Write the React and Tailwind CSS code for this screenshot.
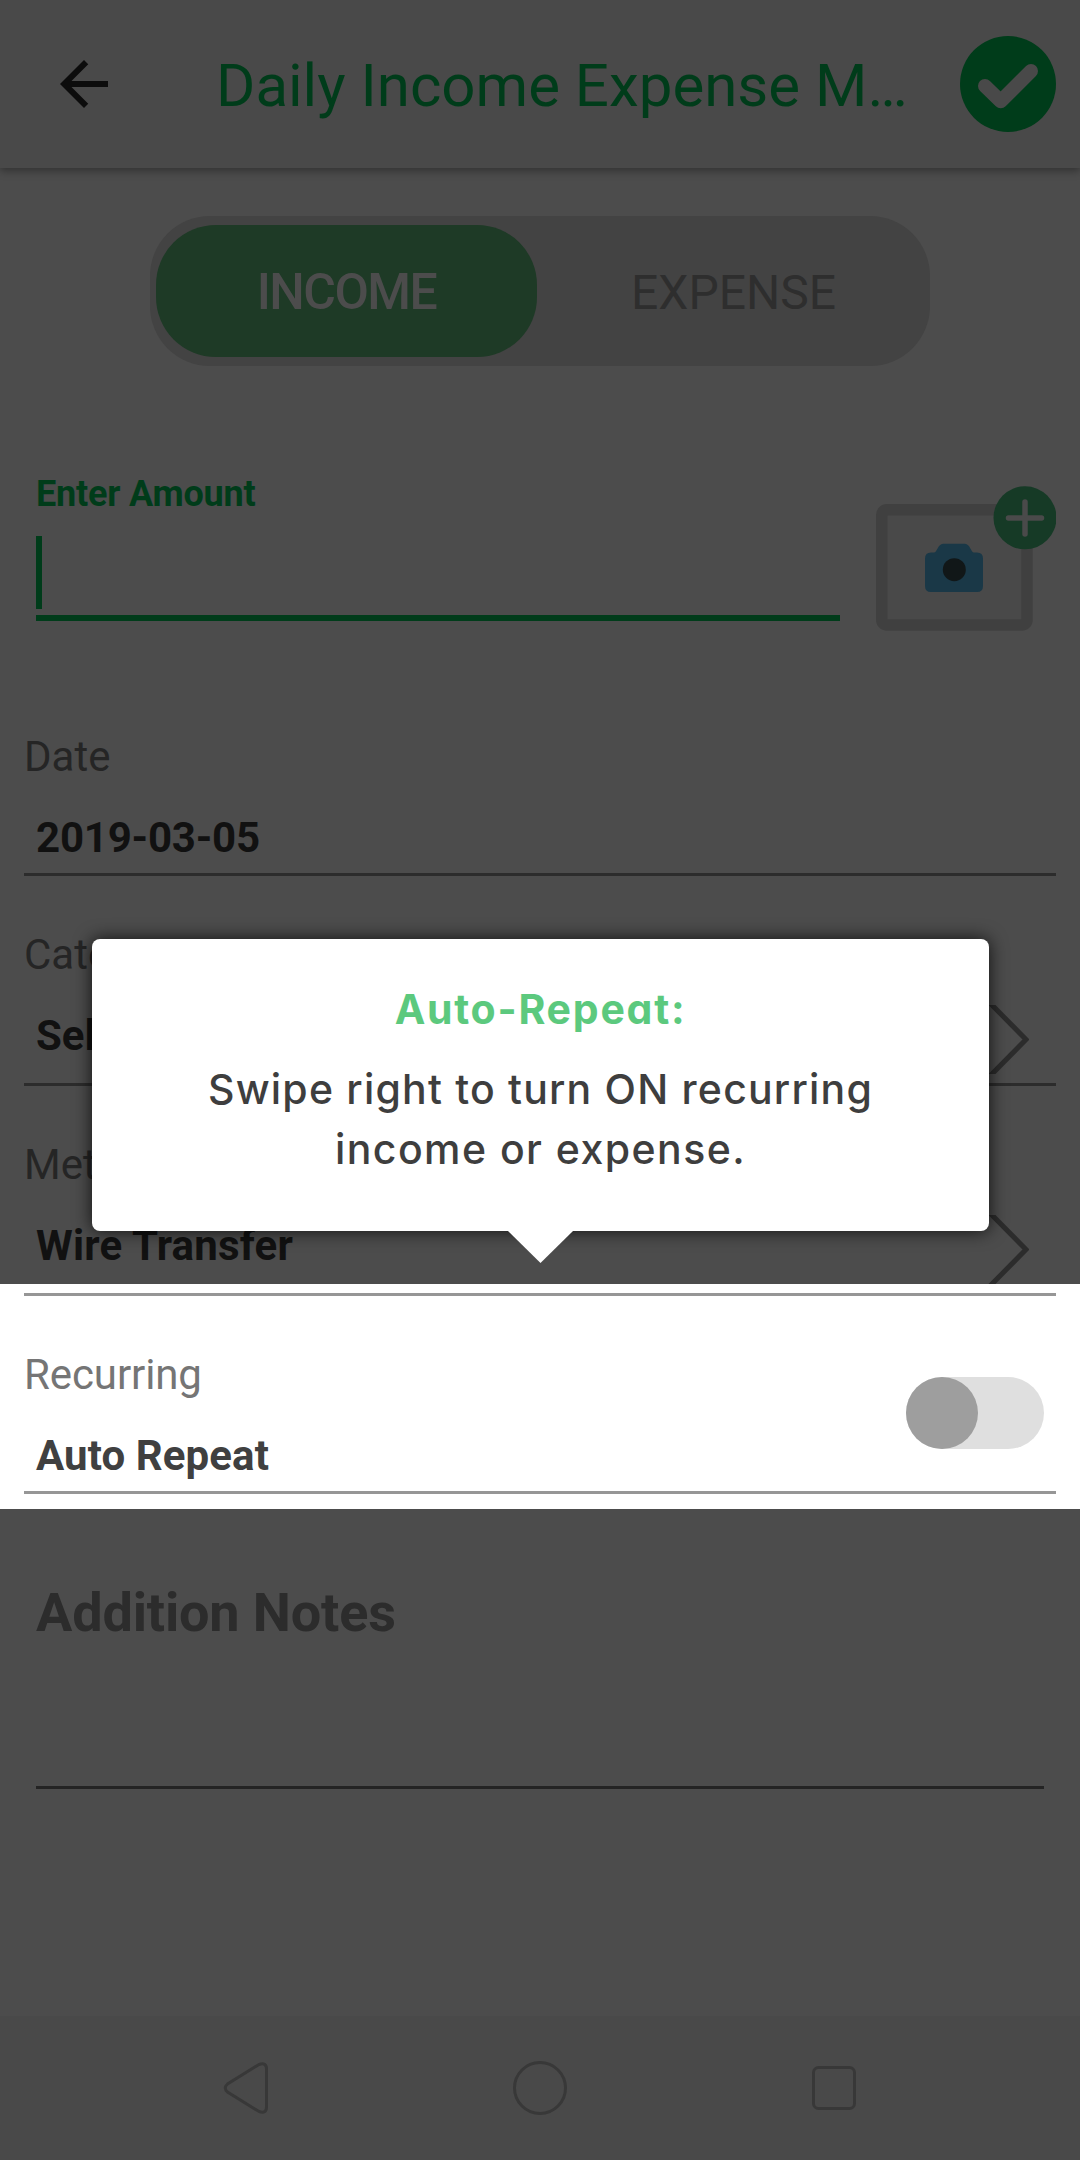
import { MdArrowBack } from "react-icons/md";

function Header() {
  return (
    <header className="relative z-10 flex h-[168px] shrink-0 items-center bg-[#494949] pl-12 pr-6 shadow-[0_3px_8px_rgba(0,0,0,0.35)]">
      <MdArrowBack className="size-[72px] shrink-0 text-[#0c0c0c]" />
      <h1 className="ml-24 grow whitespace-nowrap pt-1 text-[60px] leading-[72px] text-[#003c1a]">
        Daily Income Expense M…
      </h1>
      <svg className="size-24 shrink-0" viewBox="960 36 96 96" fill="none">
        <circle cx="1008" cy="84" r="48" fill="#003c1a" />
        <path d="M985 86L1000.7 101.3L1031 71" stroke="#494949" strokeWidth="14" strokeLinecap="round" strokeLinejoin="round" />
      </svg>
    </header>
  );
}

function Tabs() {
  return (
    <div className="mx-auto mt-12 flex h-[150px] w-[780px] shrink-0 items-center rounded-[60px] bg-[#434343] px-1.5">
      <div className="flex h-[132px] w-[381px] items-center justify-center rounded-[60px] bg-[#1e3a26] pt-[3px] text-[50px] font-medium tracking-[-1.5px] text-[#4c4c4c]">
        INCOME
      </div>
      <div className="flex flex-1 items-center justify-center pl-1.5 pt-1 text-[48px] text-[#2e2e2e]">EXPENSE</div>
    </div>
  );
}

function AddPhoto() {
  return (
    <svg className="h-[145px] w-[180px] shrink-0" viewBox="876 486 180 145">
      <rect x="881.8" y="509.8" width="145.2" height="115.2" rx="5" fill="#494949" stroke="#404040" strokeWidth="11.5" />
      <path d="M931 552.5h3c3 0 4-8.8 9-8.8h22c5 0 6 8.8 9 8.8h3q6 0 6 6V586q0 6-6 6h-46q-6 0-6-6v-27.500q0-6 6-6z" fill="#1a3847" />
      <circle cx="954.3" cy="569.7" r="11.5" fill="#111718" />
      <circle cx="1025" cy="517.8" r="31.500" fill="#163a26" />
      <path d="M1025 502v32M1008.500 518h33" stroke="#4a4a4a" strokeWidth="5.500" strokeLinecap="round" />
    </svg>
  );
}

function Field({ label, value, height, chevron, border = "border-b-[3px] border-[#2c2c2c]", labelColor = "text-[#252525]", valueStyle, children }) {
  return (
    <div className={`relative mx-6 shrink-0 pt-px ${height} ${border}`}>
      <div className={`text-[42px] leading-[50px] ${labelColor}`}>{label}</div>
      <div className={`ml-3 mt-[31px] text-[42px] font-bold leading-[50px] ${valueStyle}`}>{value}</div>
      {chevron && (
        <svg className="absolute right-[27px] top-[76px] h-[69px] w-[41px]" viewBox="0 0 41 69" fill="none">
          <path d="M1 -3L38 34.500L1 72" stroke="#2c2c2c" strokeWidth="5" />
        </svg>
      )}
      {children}
    </div>
  );
}

function Popup() {
  return (
    <div className="absolute left-[92px] top-[939px] z-20 h-[292px] w-[897px] rounded-lg bg-white pt-[43px] text-center font-['Inter',sans-serif] shadow-[0_0_18px_rgba(0,0,0,0.8)] [font-feature-settings:'cv11']">
      <div className="text-[41px] font-bold leading-[54px] tracking-[1.75px] text-[#5cc97e]">Auto-Repeat:</div>
      <p className="mt-[23px] text-[41px] font-medium leading-[60px] text-[#3e3e3e]">
        <span className="block tracking-[1.2px]">Swipe right to turn ON recurring</span>
        <span className="block tracking-[1.45px]">income or expense.</span>
      </p>
      <svg className="absolute left-[415px] top-[291px] h-[33px] w-[67px]" viewBox="0 0 67 33">
        <path d="M0 0H67L33.500 33Z" fill="#fff" />
      </svg>
    </div>
  );
}

function NavBar() {
  return (
    <nav className="mt-auto flex h-36 shrink-0 items-center justify-between bg-[#494949] px-[222px]">
      <svg className="h-[54px] w-12" viewBox="0 0 48 54" fill="none" stroke="#383838" strokeWidth="3">
        <path d="M37 3.500L5.500 23Q1 27 5.500 31L37 50.500Q44.500 53 44.500 46V8Q44.500 1 37 3.500Z" />
      </svg>
      <svg className="size-[54px]" viewBox="0 0 54 54" fill="none" stroke="#383838" strokeWidth="3">
        <circle cx="27" cy="27" r="25.500" />
      </svg>
      <svg className="h-11 w-12" viewBox="0 0 48 44" fill="none" stroke="#383838" strokeWidth="3">
        <rect x="3.500" y="1.500" width="41" height="41" rx="5" />
      </svg>
    </nav>
  );
}

export default function App() {
  return (
    <div className="relative flex h-[2160px] w-[1080px] flex-col overflow-hidden bg-[#4c4c4c] font-['Roboto',sans-serif]">
      <Header />
      <Tabs />
      <div className="mt-[108px] flex h-[157px] shrink-0 items-end justify-between pl-9 pr-6">
        <div className="mb-[10px] flex h-[147px] w-[804px] flex-col border-b-[6px] border-[#003c1a]">
          <div className="-mt-px text-[36px] font-bold leading-[42px] tracking-[-0.2px] text-[#003c1a]">Enter Amount</div>
          <div className="mt-auto mb-1.5 h-[73px] w-1.5 bg-[#003c1a]" />
        </div>
        <AddPhoto />
      </div>
      <div className="h-[100px] shrink-0" />
      <Field label="Date" value="2019-03-05" height="h-[145px]" valueStyle="text-[#111111] tracking-[-0.2px]" />
      <div className="h-[53px] shrink-0" />
      <Field label="Category" value="Select Category" height="h-[157px]" valueStyle="text-[#111111]" chevron />
      <div className="h-[53px] shrink-0" />
      <Field
        label="Method"
        value="Wire Transfer"
        height="h-[145px]"
        border=""
        valueStyle="text-[#111111] tracking-[0.2px]"
        chevron
      />
      <section className="flex h-[225px] shrink-0 flex-col bg-white">
        <div className="mx-6 mt-[9px] h-[3px] shrink-0 bg-[#969696]" />
        <div className="h-[53px] shrink-0" />
        <Field
          label="Recurring"
          value="Auto Repeat"
          height="h-[145px]"
          border="border-b-[3px] border-[#969696]"
          labelColor="text-[#757575] tracking-[-0.1px]"
          valueStyle="text-[#404040] tracking-[0.1px]"
        >
          <div className="absolute right-3 top-[28px] h-[72px] w-[138px] rounded-full bg-[#dfdfdf]">
            <div className="size-[72px] rounded-full bg-[#9e9e9e]" />
          </div>
        </Field>
      </section>
      <div className="mx-9 mt-[72px] h-[208px] shrink-0 border-b-[3px] border-[#242424] text-[54px] font-bold leading-[64px] tracking-[-0.15px] text-[#2c2c2c]">
        Addition Notes
      </div>
      <NavBar />
      <Popup />
    </div>
  );
}
